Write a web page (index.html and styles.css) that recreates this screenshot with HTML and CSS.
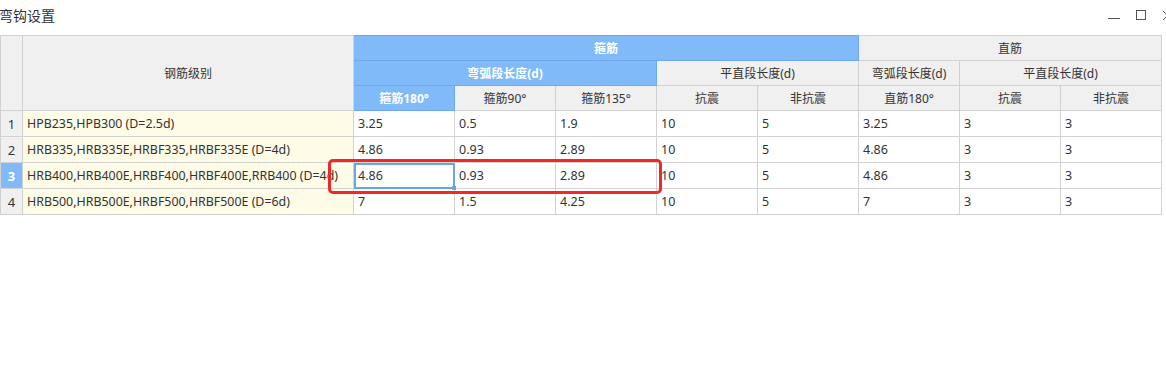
FILE: index.html
```html
<!DOCTYPE html>
<html lang="zh-CN">
<head>
  <meta charset="UTF-8" />
  <title>弯钩设置</title>
  <link rel="stylesheet" href="styles.css">
</head>
<body>

  <!-- Title bar -->
  <div class="title-bar">
    <span class="title">弯钩设置</span>
    <div class="win-btns">
      <svg width="16" height="16" viewBox="0 0 16 16"><path d="M2 10.5h12" stroke="#555" stroke-width="1" fill="none"/></svg>
      <svg width="16" height="16" viewBox="0 0 16 16"><rect x="3.5" y="2.5" width="9" height="9" stroke="#555" stroke-width="1" fill="none"/></svg>
      <svg width="16" height="16" viewBox="0 0 16 16"><path d="M3 3l9 9M12 3l-9 9" stroke="#555" stroke-width="1" fill="none"/></svg>
    </div>
  </div>

  <div class="grid-wrap">
    <table class="grid">
      <colgroup>
        <col class="c-num">
        <col class="c-name">
        <col><col><col><col><col><col><col><col>
      </colgroup>
      <thead>
        <tr class="h-row">
          <th rowspan="3"></th>
          <th rowspan="3">钢筋级别</th>
          <th colspan="5" class="blue">箍筋</th>
          <th colspan="3">直筋</th>
        </tr>
        <tr class="h-row">
          <th colspan="3" class="blue">弯弧段长度(d)</th>
          <th colspan="2">平直段长度(d)</th>
          <th>弯弧段长度(d)</th>
          <th colspan="2">平直段长度(d)</th>
        </tr>
        <tr class="h-row">
          <th class="blue">箍筋180°</th>
          <th>箍筋90°</th>
          <th>箍筋135°</th>
          <th>抗震</th>
          <th>非抗震</th>
          <th>直筋180°</th>
          <th>抗震</th>
          <th>非抗震</th>
        </tr>
      </thead>
      <tbody>
        <tr>
          <td class="num">1</td>
          <td class="name">HPB235,HPB300 (D=2.5d)</td>
          <td>3.25</td><td>0.5</td><td>1.9</td><td>10</td><td>5</td><td>3.25</td><td>3</td><td>3</td>
        </tr>
        <tr>
          <td class="num">2</td>
          <td class="name">HRB335,HRB335E,HRBF335,HRBF335E (D=4d)</td>
          <td>4.86</td><td>0.93</td><td>2.89</td><td>10</td><td>5</td><td>4.86</td><td>3</td><td>3</td>
        </tr>
        <tr>
          <td class="num current">3</td>
          <td class="name">HRB400,HRB400E,HRBF400,HRBF400E,RRB400 (D=4d)</td>
          <td class="selected">4.86</td><td>0.93</td><td>2.89</td><td>10</td><td>5</td><td>4.86</td><td>3</td><td>3</td>
        </tr>
        <tr>
          <td class="num">4</td>
          <td class="name">HRB500,HRB500E,HRBF500,HRBF500E (D=6d)</td>
          <td>7</td><td>1.5</td><td>4.25</td><td>10</td><td>5</td><td>7</td><td>3</td><td>3</td>
        </tr>
      </tbody>
    </table>

    <!-- red highlight drawn over row 3 -->
    <div class="mark"></div>
  </div>

</body>
</html>
```

FILE: styles.css
```css
body {
  margin: 0;
  background: #ffffff;
  font-family: "Noto Sans", "Noto Sans CJK SC", sans-serif;
  color: #333333;
}

.title-bar {
  height: 35px;
  display: flex;
  align-items: flex-start;
  justify-content: space-between;
}

.title {
  font-size: 14px;
  color: #333;
  margin-left: -1px;
  margin-top: 5px;
}

.win-btns {
  display: flex;
  gap: 11px;
  margin-right: -10px;
  margin-top: 8px;
}

.grid-wrap {
  position: relative;
  width: 1162px;
}

.grid {
  border-collapse: collapse;
  table-layout: fixed;
  width: 1162px;
  font-size: 12px;
}

.grid col {
  width: 101px;
}

.grid col.c-num {
  width: 22px;
}

.grid col.c-name {
  width: 331px;
}

.grid th,
.grid td {
  border: 1px solid #d2d2d2;
  padding: 0 4px;
  white-space: nowrap;
  overflow: visible;
}

.grid th {
  background: #f0f0f0;
  font-weight: normal;
  text-align: center;
  color: #333;
}

.grid th.blue {
  background: #80baf8;
  color: #ffffff;
  font-weight: bold;
  border-color: #6ea9ee;
}

.h-row {
  height: 25px;
}

.grid tbody tr {
  height: 26px;
}

.grid td {
  text-align: left;
  font-size: 12.5px;
}

.grid td.num {
  background: #f0f0f0;
  text-align: center;
  padding: 0;
  font-size: 13px;
}

.grid td.num.current {
  background: #80baf8;
  color: #ffffff;
  font-weight: bold;
}

.grid td.name {
  background: #fefbe6;
  font-size: 12.4px;
}

.grid td.selected {
  outline: 2px solid #6aa5e6;
  outline-offset: -2px;
  position: relative;
}

.grid td.selected::after {
  content: "";
  position: absolute;
  right: -2px;
  bottom: -2px;
  width: 4px;
  height: 4px;
  background: #6aa5e6;
}

.mark {
  position: absolute;
  left: 328px;
  top: 124px;
  width: 328px;
  height: 29px;
  border: 3px solid #f42727;
  border-radius: 5px;
  pointer-events: none;
}
```
